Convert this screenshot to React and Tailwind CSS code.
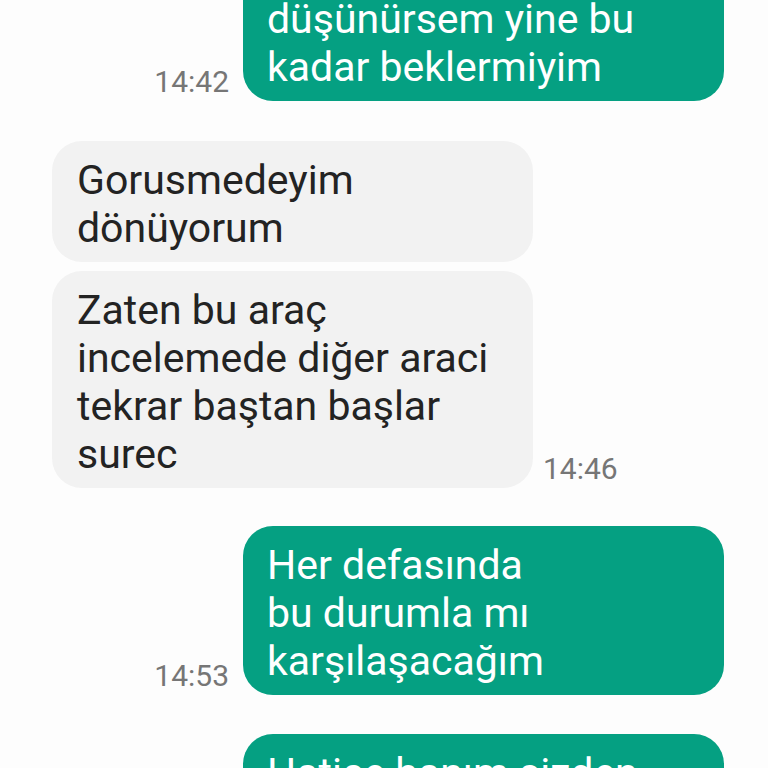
const MESSAGES = [
  { id: 1, side: "out", time: "14:42", lines: ["Bu süreci yeniden", "düşünürsem yine bu", "kadar beklermiyim"] },
  { id: 2, side: "in", lines: ["Gorusmedeyim", "dönüyorum"] },
  { id: 3, side: "in", time: "14:46", lines: ["Zaten bu araç", "incelemede diğer araci", "tekrar baştan başlar", "surec"] },
  { id: 4, side: "out", time: "14:53", lines: ["Her defasında", "bu durumla mı", "karşılaşacağım"] },
  { id: 5, side: "out", lines: ["Hatice hanım sizden", "bir dönüş bekliyorum"] },
];

function Bubble({ msg }) {
  const out = msg.side === "out";
  return (
    <div
      className={`w-[481px] rounded-[30px] pr-[20px] pt-[15px] pb-[10px] text-[41px] leading-[48px] ${
        out ? "bg-[#05a082] pl-[24px] text-white" : "bg-[#f2f2f2] pl-[25px] text-[#232323]"
      }`}
    >
      {msg.lines.map((l, i) => (
        <div key={i} className="whitespace-nowrap">{l}</div>
      ))}
    </div>
  );
}

function Time({ value }) {
  return <span className="mb-[4px] text-[30px] leading-[30px] text-[#767676]">{value}</span>;
}

export default function App() {
  return (
    <div
      className="h-[768px] w-[768px] overflow-hidden bg-[#fdfdfd]"
      style={{ fontFamily: "Roboto, 'Noto Sans', sans-serif" }}
    >
      <div className="-mt-[68px] flex flex-col">
        {/* first outgoing */}
        <div className="flex items-end justify-end gap-[14px] pr-[44px]">
          <Time value="14:42" />
          <Bubble msg={MESSAGES[0]} />
        </div>

        {/* incoming pair */}
        <div className="mt-[40px] flex flex-col gap-[9px] pl-[52px]">
          <Bubble msg={MESSAGES[1]} />
          <div className="flex items-end gap-[10px]">
            <Bubble msg={MESSAGES[2]} />
            <Time value="14:46" />
          </div>
        </div>

        <div className="mt-[38px] flex items-end justify-end gap-[14px] pr-[44px]">
          <Time value="14:53" />
          <Bubble msg={MESSAGES[3]} />
        </div>

        <div className="mt-[39px] flex items-end justify-end pr-[44px]">
          <Bubble msg={MESSAGES[4]} />
        </div>
      </div>
    </div>
  );
}
